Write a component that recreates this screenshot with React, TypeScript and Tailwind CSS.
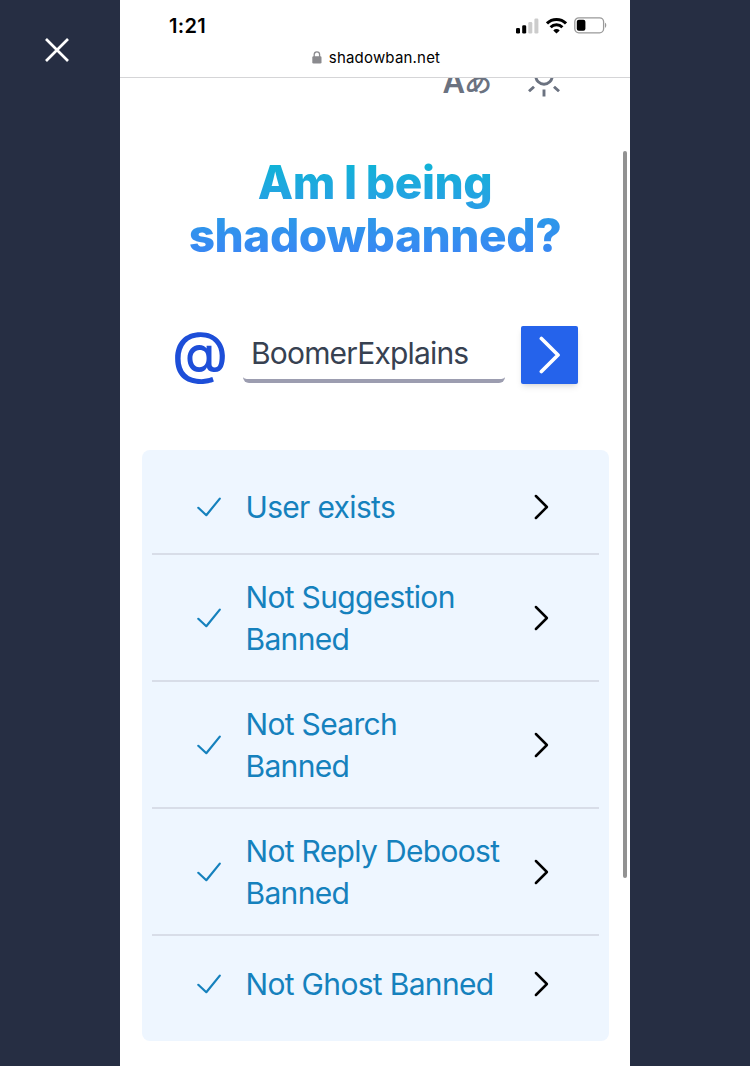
import React, { useState } from 'react';

interface TestResult {
    id: string;
    label: string;
}

const RESULTS: TestResult[] = [
    { id: 'exists', label: 'User exists' },
    { id: 'suggestion', label: 'Not Suggestion Banned' },
    { id: 'search', label: 'Not Search Banned' },
    { id: 'reply', label: 'Not Reply Deboost Banned' },
    { id: 'ghost', label: 'Not Ghost Banned' },
];

function SignalIcon() {
    return (
        <svg width="23" height="16" viewBox="0 0 23 16">
            <rect x="0" y="10" width="4" height="5.5" rx="1.3" fill="#000" />
            <rect x="6.2" y="7.3" width="4" height="8.2" rx="1.3" fill="#000" />
            <rect x="12.3" y="4" width="4" height="11.5" rx="1.3" fill="#ccc" />
            <rect x="18.4" y="0.5" width="4" height="15" rx="1.3" fill="#ccc" />
        </svg>
    );
}

function WifiIcon() {
    return (
        <svg width="21" height="16" viewBox="0 0 21 16" fill="none" stroke="#000" strokeWidth="3">
            <path d="M1 5.4a13.6 13.6 0 0 1 19 0" />
            <path d="M4.6 9.2a8.4 8.4 0 0 1 11.8 0" />
            <path d="M10.5 15.6 7.3 12.4a4.6 4.6 0 0 1 6.4 0z" fill="#000" stroke="none" />
        </svg>
    );
}

function BatteryIcon() {
    return (
        <svg width="33" height="17" viewBox="0 0 33 17">
            <rect x="0.8" y="0.8" width="28.8" height="15" rx="4" fill="none" stroke="#999" strokeWidth="1.3" />
            <rect x="2.8" y="2.8" width="8.6" height="11" rx="2" fill="#000" />
            <path d="M31 5.8c1.7.6 1.7 4.4 0 5z" fill="#999" />
        </svg>
    );
}

function LockIcon() {
    return (
        <svg width="10" height="13" viewBox="0 0 10 13">
            <rect x="0.3" y="5.3" width="9.2" height="7.2" rx="1.3" fill="#8a8a8e" />
            <path d="M2.2 6V3.6a2.7 2.7 0 0 1 5.4 0V6" fill="none" stroke="#8a8a8e" strokeWidth="1.3" />
        </svg>
    );
}

function SunIcon() {
    return (
        <svg width="38" height="38" viewBox="0 0 38 38" fill="none" stroke="#6b7280" strokeWidth="2.9">
            <circle cx="19" cy="16" r="8.2" />
            <path d="M19 29.5v7M9 26.7l-5 4.6M29 26.7l5 4.6M8 8 3.6 3.6M30 8l4.4-4.4" />
        </svg>
    );
}

function CheckIcon() {
    return (
        <svg width="25" height="20" viewBox="0 0 25 20" fill="none" stroke="#1581bd" strokeWidth="2.2" strokeLinecap="round" strokeLinejoin="round">
            <path d="M2.3 10.8 10.3 18.2 23.8 1.6" />
        </svg>
    );
}

function ChevronIcon() {
    return (
        <svg width="15" height="26" viewBox="0 0 15 26" fill="none" stroke="#000" strokeWidth="2.5" strokeLinecap="round" strokeLinejoin="round">
            <path d="M1.9 2 12.9 13 1.9 24" />
        </svg>
    );
}

export default function App() {
    const [screenName, setScreenName] = useState('BoomerExplains');

    return (
        <div className="flex h-[1066px] w-[750px] overflow-hidden bg-[#262e43] font-['Inter','Noto_Sans_CJK_JP',sans-serif]">
            <div className="flex w-[120px] shrink-0 items-start pt-[37px] pl-[44px]">
                <button aria-label="Close">
                    <svg width="26" height="26" viewBox="0 0 26 26" stroke="#fff" strokeWidth="2.7">
                        <path d="M2 2 24 24M24 2 2 24" />
                    </svg>
                </button>
            </div>

            <div className="relative flex w-[510px] shrink-0 flex-col bg-white">
                <header className="h-[78px] shrink-0 border-b border-[#d5d5d7]">
                    <div className="flex h-[49px] items-center pt-[2px] pr-[23px] pl-[49px]">
                        <span className="text-[20px] leading-none font-semibold tracking-[0.3px] text-black">1:21</span>
                        <div className="ml-auto flex items-center gap-[7px]">
                            <SignalIcon />
                            <WifiIcon />
                            <BatteryIcon />
                        </div>
                    </div>
                    <div className="flex h-[16px] items-center justify-center gap-[7px] pl-[2px]">
                        <LockIcon />
                        <span className="text-[15px] leading-none tracking-[0.2px] text-black">shadowban.net</span>
                    </div>
                </header>

                {/* toolbar is scrolled halfway under the browser bar */}
                <div className="flex h-[20px] shrink-0 items-end justify-end gap-[33px] overflow-hidden pr-[67px] text-[#6b7280]">
                    <div className="flex items-end pb-[3px] leading-none">
                        <span className="pb-[1px] text-[31px] leading-[24px] font-semibold">A</span>
                        <span className="-ml-px pb-[1px] text-[28px] leading-[24px] font-medium">あ</span>
                    </div>
                    <SunIcon />
                </div>

                <h1 className="mx-auto mt-[58px] w-[420px] bg-gradient-to-b from-[#06b6d4] to-[#3b82f6] bg-clip-text text-center text-[46px] leading-[53px] font-extrabold tracking-[-0.45px] [word-spacing:-0.5px] text-transparent">
                    Am I being shadowbanned?
                </h1>

                <form className="mt-[64px] flex h-[58px] items-center pl-[54px]" onSubmit={(e) => e.preventDefault()}>
                    <span className="-ml-[2px] w-[71px] shrink-0 pb-[4px] text-[57px] leading-[58px] font-medium text-[#1d4ed8]">@</span>
                    <input
                        className="mb-[2px] h-[57px] w-[262px] rounded-md border-b-4 border-[#9c9db0] bg-white pt-[1px] pr-2 pl-[8px] text-[30px] tracking-[-0.82px] text-[#374151] outline-none"
                        value={screenName}
                        onChange={(e) => setScreenName(e.target.value)}
                    />
                    <button type="submit" aria-label="Check" className="ml-4 flex h-[58px] w-[57px] items-center justify-center rounded-[2px] bg-[#2563eb] shadow-md">
                        <svg width="22" height="38" viewBox="0 0 22 38" fill="none" stroke="#fff" strokeWidth="3.7" strokeLinecap="round" strokeLinejoin="round">
                            <path d="M2.4 2.5 19 19 2.4 35.5" />
                        </svg>
                    </button>
                </form>

                <ul className="mt-[66px] ml-[22px] w-[467px] divide-y-2 divide-[#d8dde8] rounded-lg bg-[#eef6ff] p-[10px]">
                    {RESULTS.map((result) => (
                        <li key={result.id} className="flex min-h-[95px] items-center py-[20.5px] pr-[50px] pl-[44px]">
                            <CheckIcon />
                            <span className="ml-[24.5px] w-[257px] text-[30px] leading-[42px] tracking-[-0.68px] text-[#1581bd]">{result.label}</span>
                            <span className="ml-auto">
                                <ChevronIcon />
                            </span>
                        </li>
                    ))}
                </ul>

                <div className="absolute top-[151px] right-[3px] h-[727px] w-[4px] rounded-full bg-[#929292]" />
            </div>
        </div>
    );
}
